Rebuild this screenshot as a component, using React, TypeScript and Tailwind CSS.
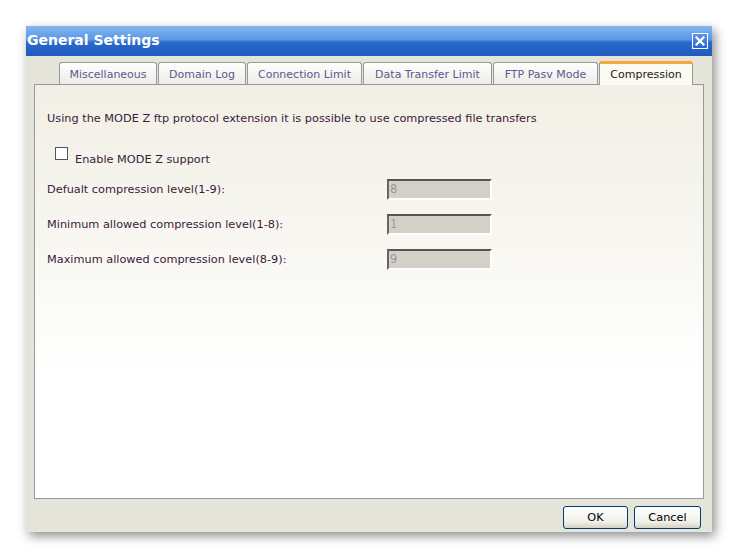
import React from "react";

const font = { fontFamily: '"DejaVu Sans", Verdana, sans-serif' };

const tabs = [
  { label: "Miscellaneous", w: "w-[98px]" },
  { label: "Domain Log", w: "w-[88px]" },
  { label: "Connection Limit", w: "w-[115px]" },
  { label: "Data Transfer Limit", w: "w-[129px]" },
  { label: "FTP Pasv Mode", w: "w-[105px]" },
];

const rows = [
  { label: "Defualt compression level(1-9):", value: "8" },
  { label: "Minimum allowed compression level(1-8):", value: "1" },
  { label: "Maximum allowed compression level(8-9):", value: "9" },
];

function CloseButton() {
  return (
    <div className="flex h-4 w-4 items-center justify-center border border-white bg-[linear-gradient(#5b95ee,#2d64d6)]">
      <svg width="10" height="10" viewBox="0 0 10 10">
        <path d="M1.5 1.5 L8.5 8.5 M8.5 1.5 L1.5 8.5" stroke="white" strokeWidth="2.2" strokeLinecap="square" />
      </svg>
    </div>
  );
}

function Tab({ label, w }: { label: string; w: string }) {
  return (
    <div
      className={`${w} flex h-[22px] items-center justify-center rounded-t-[3px] border border-b-0 border-[#919b9c] bg-[linear-gradient(#ffffff,#ecebe6)] pt-[3px] text-[11px] text-[#5a5a8c]`}
    >
      {label}
    </div>
  );
}

function XpButton({ label, w }: { label: string; w: string }) {
  return (
    <button
      className={`${w} h-[23px] rounded-[3px] border border-[#003c74] bg-[linear-gradient(#ffffff,#f0f0ea_70%,#d6d0c5)] pt-[1px] text-[11.3px] text-black`}
      style={font}
    >
      {label}
    </button>
  );
}

export default function App() {
  return (
    <div className="min-h-[559px] bg-white pl-[26px] pt-[26px]" style={font}>
      <div className="flex h-[506px] w-[686px] flex-col bg-[#e5e4d8] shadow-[3px_4px_10px_rgba(0,0,0,0.45)]">
        {/* title bar */}
        <div className="flex h-[30px] items-center justify-between bg-[linear-gradient(#82b6ef_0%,#5a98e4_45%,#2a68cc_55%,#1f5bbf_100%)] pl-[1px] pr-[4px]">
          <span className="-mt-[1px] text-[14px] font-bold text-white">General Settings</span>
          <CloseButton />
        </div>

        {/* tabs */}
        <div className="flex h-[28px] items-end gap-[1px] pl-[33px]">
          {tabs.map((t) => (
            <Tab key={t.label} label={t.label} w={t.w} />
          ))}
          <div className="relative z-10 -mb-px flex h-[24px] w-[94px] items-center justify-center rounded-t-[3px] border-x border-t-[3px] border-x-[#919b9c] border-t-[#f5a93a] bg-[#fbfaf3] pt-[2px] text-[11px] text-[#222]">
            Compression
          </div>
        </div>

        {/* panel */}
        <div className="mx-[8px] flex h-[415px] flex-col border border-[#919b9c] bg-[linear-gradient(#f1efe5_0%,#f7f6f0_35%,#ffffff_70%)] px-[12px] pt-[27px] text-[11.3px] text-[#3a1a3a]">
          <p className="leading-[13px]">
            Using the MODE Z ftp protocol extension it is possible to use compressed file transfers
          </p>
          <label className="mt-[22px] flex items-start gap-[7px] pl-[8px]">
            <span className="h-[13px] w-[13px] border border-[#555] bg-white" />
            <span className="mt-[5px]">Enable MODE Z support</span>
          </label>
          <div className="mt-[10px] flex flex-col gap-[14px]">
            {rows.map((r) => (
              <div key={r.label} className="flex h-[21px] items-center">
                <span className="w-[340px] pt-[2px]">{r.label}</span>
                <div className="flex h-[21px] w-[105px] items-center border-2 border-b-white border-l-[#666] border-r-white border-t-[#555] bg-[#d4d0c8] pl-[1px] text-[11.5px] text-[#9a9a9a]">
                  {r.value}
                </div>
              </div>
            ))}
          </div>
        </div>

        {/* footer */}
        <div className="flex flex-1 items-start justify-end gap-[6px] pr-[11px] pt-[7px]">
          <XpButton label="OK" w="w-[65px]" />
          <XpButton label="Cancel" w="w-[67px]" />
        </div>
      </div>
    </div>
  );
}
